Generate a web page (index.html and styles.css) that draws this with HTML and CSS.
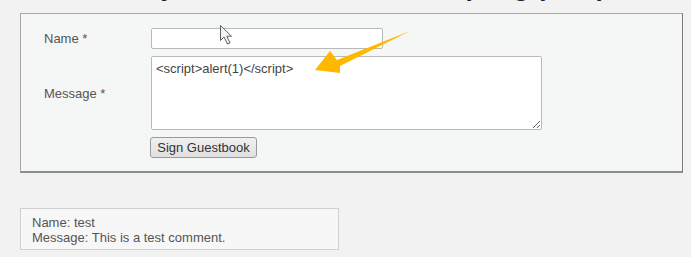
FILE: index.html
```html
<!DOCTYPE html>
<html>
<head>
<meta charset="utf-8">
<link rel="stylesheet" href="styles.css">
</head>
<body>
<div class="page">
  <h1 class="title">Vulnerability: Stored Cross Site Scripting (XSS)</h1>
  <div class="vulnerable-box">
    <form class="guest-form">
      <label class="form-label">Name *</label>
      <input class="name-input" type="text">
      <label class="form-label">Message *</label>
      <textarea class="msg-input">&lt;script&gt;alert(1)&lt;/script&gt;</textarea>
      <span></span>
      <div><button class="sign-btn" type="button">Sign Guestbook</button></div>
    </form>
  </div>
  <div class="comment">
    <div>Name: test</div>
    <div>Message: This is a test comment.</div>
  </div>
</div>
<svg class="overlay" width="691" height="257" viewBox="0 0 691 257">
  <polygon points="410,31 337,60 330,51 315,70 340,73 340,66" fill="#ffb800"/>
  <path d="M220.5 25.5 L220.5 40.5 L224 37 L227.5 44 L230 43 L226.8 36.2 L231.5 36.2 Z" fill="#f4f4f4" stroke="#606060" stroke-width="1" stroke-linejoin="round"/>
</svg>
</body>
</html>
```
FILE: styles.css
```css
html, body {
  margin: 0;
  padding: 0;
}
body {
  background: #f2f2f2;
  font-family: "Liberation Sans", Arial, sans-serif;
  width: 691px;
  height: 257px;
  overflow: hidden;
  position: relative;
}
.page {
  padding-left: 20px;
  width: 663px;
}
.title {
  font-size: 26px;
  line-height: 30px;
  font-weight: bold;
  color: #222;
  margin: -28px 0 11px 0;
  white-space: nowrap;
}
.vulnerable-box {
  background: #f5f6f6;
  border: 1px solid #a6a6a6;
  border-right-color: #7a7a7a;
  border-bottom: 2px solid #8c8c8c;
  box-sizing: border-box;
  width: 663px;
  height: 160px;
  padding: 14px 0 0 23px;
}
.guest-form {
  display: grid;
  grid-template-columns: 107px auto;
  row-gap: 7px;
  align-items: center;
}
.form-label {
  font-size: 13px;
  color: #555;
}
.name-input {
  box-sizing: border-box;
  width: 232px;
  height: 21px;
  border: 1px solid #b9b9b9;
  border-radius: 2px;
  background: #fff;
  margin: 0;
}
.msg-input {
  box-sizing: border-box;
  width: 391px;
  height: 74px;
  border: 1px solid #b9b9b9;
  border-radius: 2px;
  background: #fff;
  margin: 0;
  padding: 4px 4px;
  font-family: "Liberation Sans", Arial, sans-serif;
  font-size: 13px;
  color: #444;
  display: block;
}
.sign-btn {
  box-sizing: border-box;
  width: 107px;
  height: 21px;
  margin: 0 0 0 -1px;
  padding: 0;
  border: 1px solid #9a9a9a;
  border-radius: 3px;
  background: linear-gradient(#f0f0f0, #e0e0e0);
  font-family: "Liberation Sans", Arial, sans-serif;
  font-size: 13px;
  color: #333;
}
.comment {
  margin-top: 35px;
  box-sizing: border-box;
  width: 319px;
  height: 42px;
  border: 1px solid #cfcfcf;
  background: #f7f7f7;
  padding: 6px 0 0 11px;
  font-size: 13px;
  line-height: 15px;
  color: #555;
}
.overlay {
  position: absolute;
  left: 0;
  top: 0;
  pointer-events: none;
}
```
